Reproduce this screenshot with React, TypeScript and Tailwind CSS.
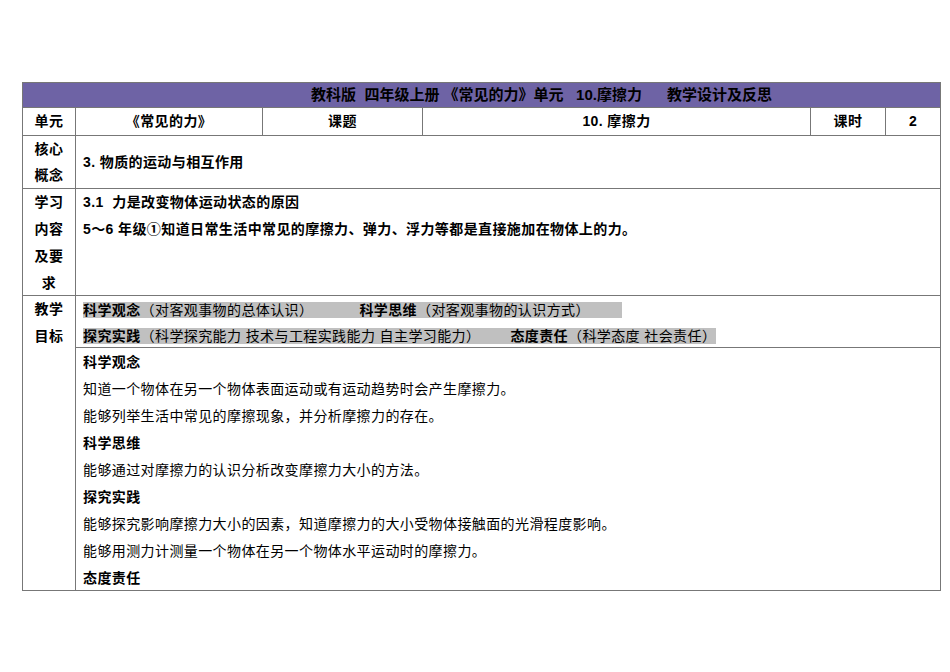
export default function App() {
  const f = { fontFamily: '"Liberation Sans","Noto Sans CJK SC",sans-serif' };
  const b = "border-[#777]";
  const hl = "bg-[#c0c0c0]";
  return (
    <div className="w-[950px] h-[672px] bg-white pt-[82px] pl-[22px] text-[14px] tracking-[0.4px] text-black" style={f}>
      <div className={`w-[919px] border ${b}`}>
        <div className={`h-[25px] bg-[#6e63a5] border-b ${b} flex items-center justify-center font-bold text-[15px] tracking-normal pl-[120px]`}>
          教科版&nbsp; 四年级上册 《常见的力》单元&nbsp;&nbsp; 10.摩擦力&nbsp;&nbsp;&nbsp;&nbsp;&nbsp; 教学设计及反思
        </div>
        <div className={`flex h-[28px] border-b ${b} font-bold`}>
          <div className={`w-[53px] border-r ${b} flex items-center justify-center`}>单元</div>
          <div className={`w-[187px] border-r ${b} flex items-center justify-center`}>《常见的力》</div>
          <div className={`w-[160px] border-r ${b} flex items-center justify-center`}>课题</div>
          <div className={`w-[388px] border-r ${b} flex items-center justify-center`}>10. 摩擦力</div>
          <div className={`w-[75px] border-r ${b} flex items-center justify-center`}>课时</div>
          <div className="flex-1 flex items-center justify-center">2</div>
        </div>
        <div className={`flex h-[53px] border-b ${b} font-bold`}>
          <div className={`w-[53px] border-r ${b} flex flex-col items-center justify-center leading-[26px]`}><span>核心</span><span>概念</span></div>
          <div className="flex-1 flex items-center px-[7px]">3. 物质的运动与相互作用</div>
        </div>
        <div className={`flex h-[107px] border-b ${b} font-bold`}>
          <div className={`w-[53px] border-r ${b} flex flex-col items-center leading-[27px]`}><span>学习</span><span>内容</span><span>及要</span><span>求</span></div>
          <div className="flex-1 px-[7px] leading-[27px]">
            <div>3.1&nbsp; 力是改变物体运动状态的原因</div>
            <div>5～6 年级①知道日常生活中常见的摩擦力、弹力、浮力等都是直接施加在物体上的力。</div>
          </div>
        </div>
        <div className="flex h-[294px]">
          <div className={`w-[53px] border-r ${b} flex flex-col items-center leading-[27px] font-bold`}><span>教学</span><span>目标</span></div>
          <div className="flex-1 flex flex-col">
            <div className={`h-[52px] border-b ${b} px-[7px] pt-[1px] leading-[26px]`}>
              <div><span className={hl}><b>科学观念</b>（对客观事物的总体认识）<span className="inline-block w-[46px]" /><b>科学思维</b>（对客观事物的认识方式）<span className="inline-block w-[32px]" /></span></div>
              <div><span className={hl}><b>探究实践</b>（科学探究能力 技术与工程实践能力 自主学习能力）<span className="inline-block w-[30px]" /><b>态度责任</b>（科学态度 社会责任）</span></div>
            </div>
            <div className="px-[7px] pt-[1px] leading-[27px]">
              <div className="font-bold">科学观念</div>
              <div>知道一个物体在另一个物体表面运动或有运动趋势时会产生摩擦力。</div>
              <div>能够列举生活中常见的摩擦现象，并分析摩擦力的存在。</div>
              <div className="font-bold">科学思维</div>
              <div>能够通过对摩擦力的认识分析改变摩擦力大小的方法。</div>
              <div className="font-bold">探究实践</div>
              <div>能够探究影响摩擦力大小的因素，知道摩擦力的大小受物体接触面的光滑程度影响。</div>
              <div>能够用测力计测量一个物体在另一个物体水平运动时的摩擦力。</div>
              <div className="font-bold">态度责任</div>
            </div>
          </div>
        </div>
      </div>
    </div>
  );
}
